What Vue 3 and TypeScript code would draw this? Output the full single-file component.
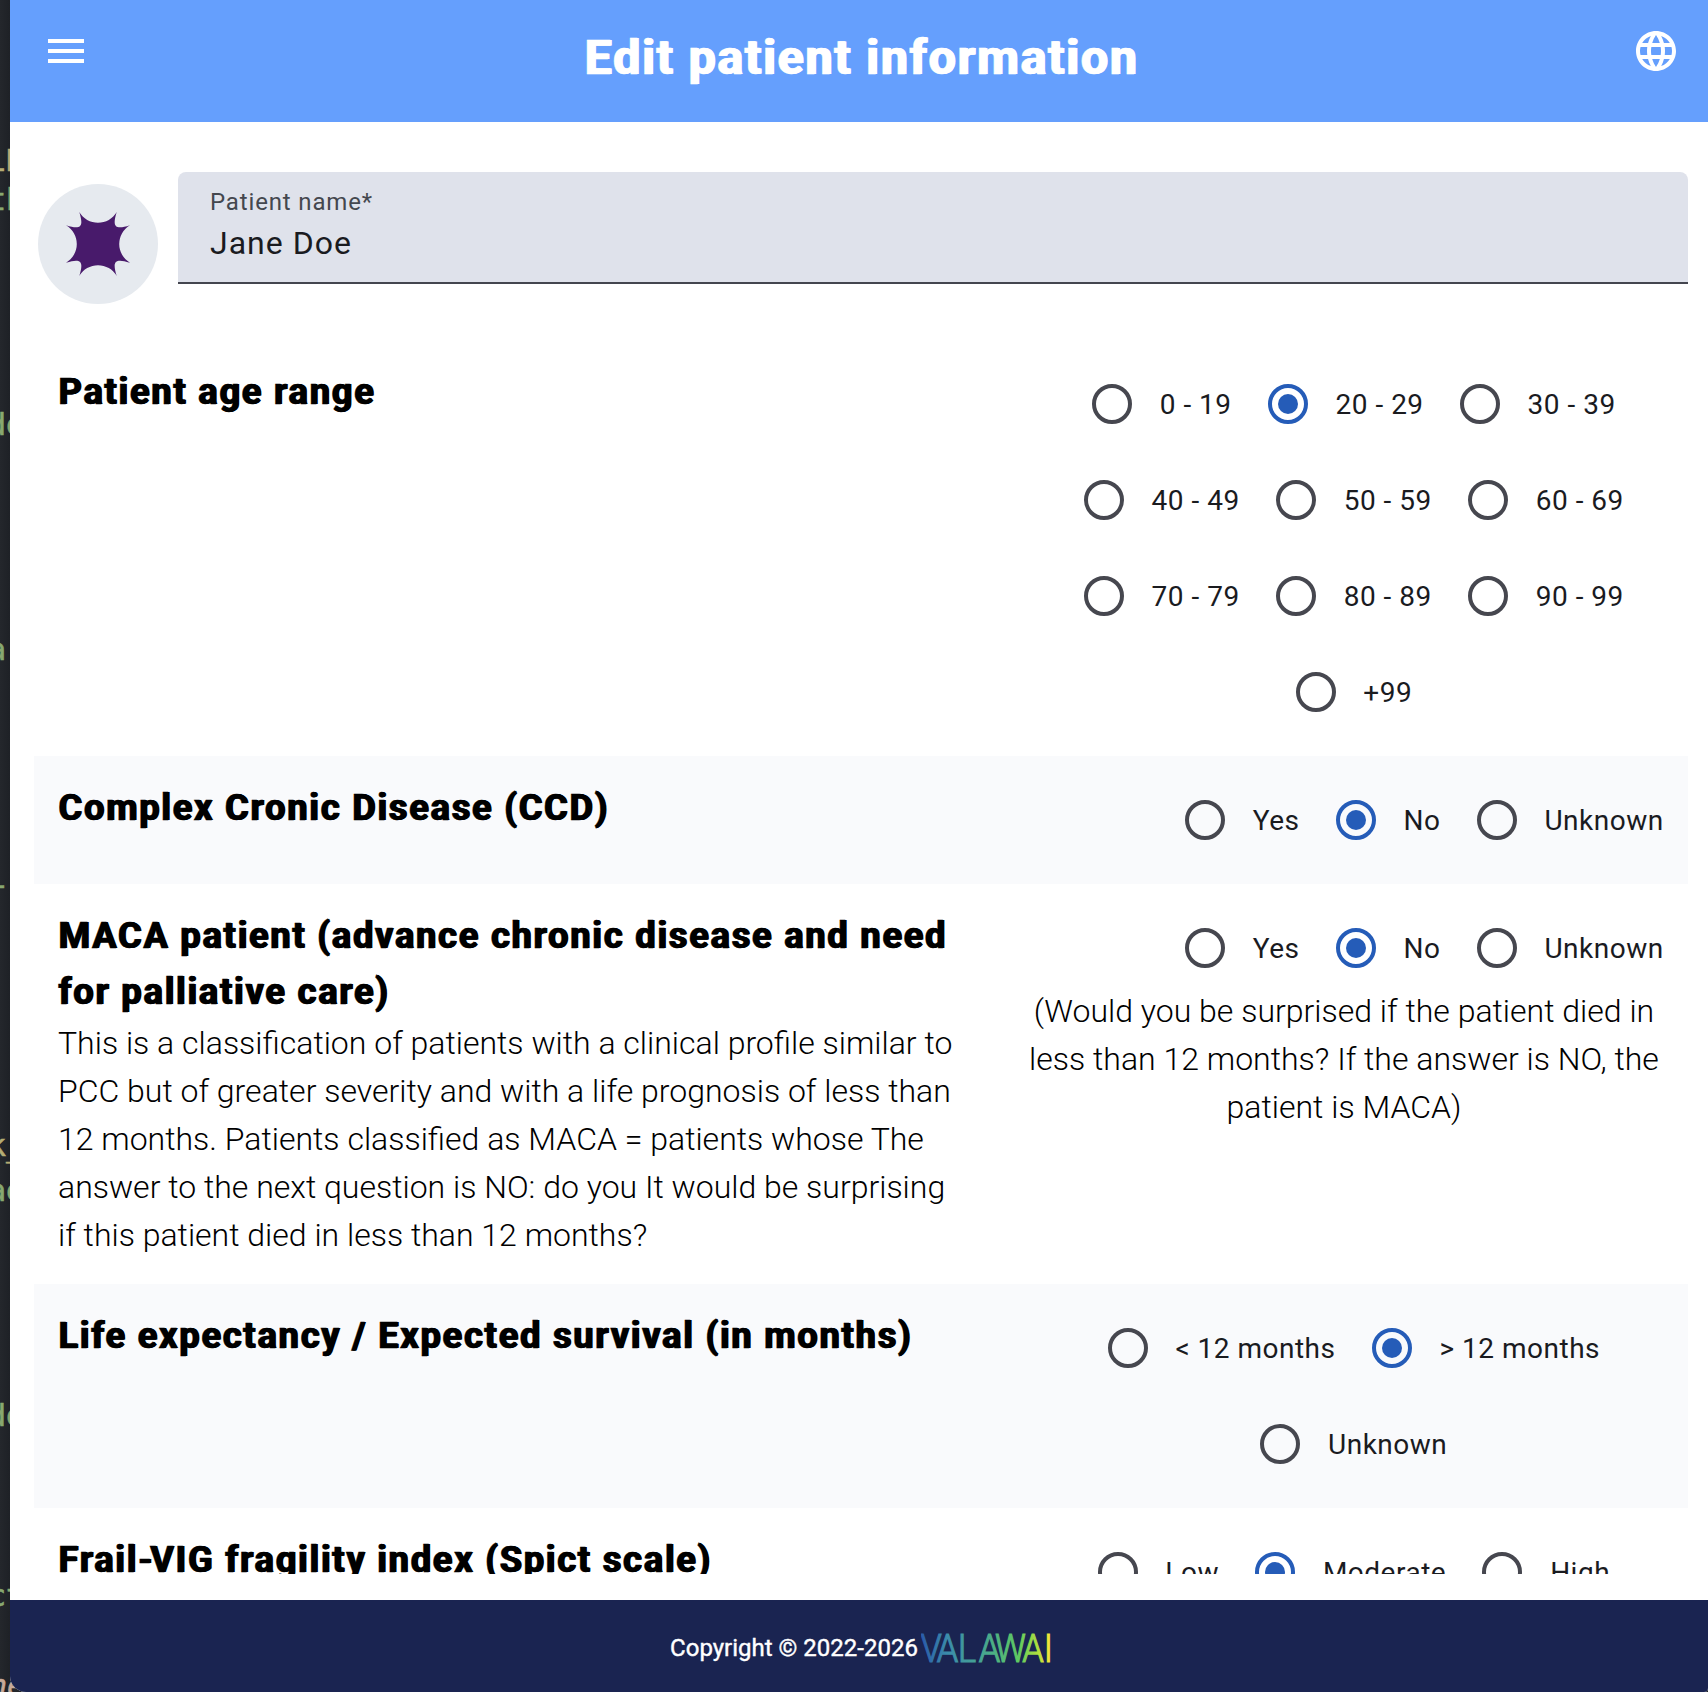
<script setup lang="ts">
interface Question {
  title: string
  description?: string
  options: string[]
  selected: string
  hint?: string
  wide?: boolean
}

interface CodeFragment {
  text: string
  top: number
  left: number
  tone: string
}

const questions: Question[] = [
  {
    title: 'Patient age range',
    options: ['0 - 19', '20 - 29', '30 - 39', '40 - 49', '50 - 59', '60 - 69', '70 - 79', '80 - 89', '90 - 99', '+99'],
    selected: '20 - 29',
    wide: true,
  },
  { title: 'Complex Cronic Disease (CCD)', options: ['Yes', 'No', 'Unknown'], selected: 'No' },
  {
    title: 'MACA patient (advance chronic disease and need for palliative care)',
    description:
      'This is a classification of patients with a clinical profile similar to PCC but of greater severity and with a life prognosis of less than 12 months. Patients classified as MACA = patients whose The answer to the next question is NO: do you It would be surprising if this patient died in less than 12 months?',
    options: ['Yes', 'No', 'Unknown'],
    selected: 'No',
    hint: '(Would you be surprised if the patient died in less than 12 months? If the answer is NO, the patient is MACA)',
  },
  {
    title: 'Life expectancy / Expected survival (in months)',
    options: ['< 12 months', '> 12 months', 'Unknown'],
    selected: '> 12 months',
    wide: true,
  },
  {
    title: 'Frail-VIG fragility index (Spict scale)',
    options: ['Low', 'Moderate', 'High'],
    selected: 'Moderate',
    wide: true,
  },
]

const fragments: CodeFragment[] = [
  { text: 'LL', top: 143, left: -13, tone: 'yellow' },
  { text: 'th', top: 182, left: -12, tone: 'green' },
  { text: 'de', top: 407, left: -12, tone: 'green' },
  { text: 'ar', top: 632, left: -12, tone: 'green' },
  { text: '--', top: 867, left: -9, tone: 'green' },
  { text: 'k_', top: 1128, left: -12, tone: 'yellow' },
  { text: 'ae', top: 1173, left: -12, tone: 'green' },
  { text: 'de', top: 1398, left: -12, tone: 'green' },
  { text: 'ct', top: 1578, left: -12, tone: 'green' },
  { text: 'ne', top: 1668, left: -11, tone: 'pink' },
]
</script>

<template>
  <div class="desktop">
    <aside class="editor">
      <span
        v-for="f in fragments"
        :key="f.top"
        class="code"
        :class="f.tone"
        :style="{ top: f.top + 'px', left: f.left + 'px' }"
      >{{ f.text }}</span>
    </aside>
    <div class="window">
      <header class="toolbar">
        <button class="icon-button" aria-label="Menu">
          <svg viewBox="0 0 24 24"><path d="M3 18h18v-2H3v2zm0-5h18v-2H3v2zm0-7v2h18V6H3z" /></svg>
        </button>
        <h1>Edit patient information</h1>
        <button class="icon-button" aria-label="Language">
          <svg viewBox="0 0 24 24">
            <path d="M11.99 2C6.47 2 2 6.48 2 12s4.47 10 9.99 10C17.52 22 22 17.52 22 12S17.52 2 11.99 2zm6.93 6h-2.95c-.32-1.25-.78-2.45-1.38-3.56 1.84.63 3.37 1.91 4.33 3.56zM12 4.04c.83 1.2 1.48 2.53 1.91 3.96h-3.82c.43-1.43 1.08-2.76 1.91-3.96zM4.26 14C4.1 13.36 4 12.69 4 12s.1-1.36.26-2h3.38c-.08.66-.14 1.32-.14 2s.06 1.34.14 2H4.26zm.82 2h2.95c.32 1.25.78 2.45 1.38 3.56-1.84-.63-3.37-1.9-4.33-3.56zm2.95-8H5.08c.96-1.66 2.49-2.93 4.33-3.56C8.81 5.55 8.35 6.75 8.03 8zM12 19.96c-.83-1.2-1.48-2.53-1.91-3.96h3.82c-.43 1.43-1.08 2.76-1.91 3.96zM14.34 14H9.66c-.09-.66-.16-1.32-.16-2s.07-1.35.16-2h4.68c.09.65.16 1.32.16 2s-.07 1.34-.16 2zm.25 5.56c.6-1.11 1.06-2.31 1.38-3.56h2.95c-.96 1.65-2.49 2.93-4.33 3.56zM16.36 14c.08-.66.14-1.32.14-2s-.06-1.34-.14-2h3.38c.16.64.26 1.31.26 2s-.1 1.36-.26 2h-3.38z" />
          </svg>
        </button>
      </header>

      <main class="content">
        <section class="identity">
          <svg class="avatar" viewBox="-60 -60 120 120">
            <circle r="60" fill="#e6eaef" />
            <path
              fill="#481a6b"
              d="M-18.7 -32 A21.6 21.6 0 0 0 18.7 -32 C14 -17 17 -14 32 -18.7 A21.6 21.6 0 0 0 32 18.7 C17 14 14 17 18.7 32 A21.6 21.6 0 0 0 -18.7 32 C-14 17 -17 14 -32 18.7 A21.6 21.6 0 0 0 -32 -18.7 C-17 -14 -14 -17 -18.7 -32Z"
            />
          </svg>
          <div class="field">
            <span class="field-label">Patient name*</span>
            <span class="field-value">Jane Doe</span>
          </div>
        </section>

        <section v-for="q in questions" :key="q.title" class="question">
          <div class="prompt">
            <h2><template v-for="(part, i) in q.title.split('-')" :key="i"><span v-if="i > 0" class="hyphen">-</span>{{ part }}</template></h2>
            <p v-if="q.description">{{ q.description }}</p>
          </div>
          <div class="answer">
            <div class="radios" :class="{ wide: q.wide }">
              <label v-for="o in q.options" :key="o" class="radio">
                <span class="target"><span class="ring" :class="{ checked: o === q.selected }"></span></span>
                <span class="radio-text">{{ o }}</span>
              </label>
            </div>
            <p v-if="q.hint" class="hint">{{ q.hint }}</p>
          </div>
        </section>
      </main>

      <footer class="footer">
        <span>Copyright © 2022-2026</span>
        <svg class="logo" viewBox="0 0 132 32">
          <defs>
            <linearGradient id="brand" gradientUnits="userSpaceOnUse" x1="0" y1="0" x2="148" y2="0">
              <stop offset="0" stop-color="#2a5bab" />
              <stop offset="0.2" stop-color="#3b8cab" />
              <stop offset="0.5" stop-color="#48a88e" />
              <stop offset="0.75" stop-color="#5fcb61" />
              <stop offset="0.9" stop-color="#b2e03d" />
              <stop offset="1" stop-color="#fde838" />
            </linearGradient>
          </defs>
          <text
            class="logo-text"
            transform="scale(0.88 1)"
            x="-0.5 18 42 65.5 84 115 139.5"
            y="30"
            fill="url(#brand)"
            stroke="url(#brand)"
          >VALAWAI</text>
        </svg>
      </footer>
    </div>
  </div>
</template>

<style>
body {
  margin: 0;
}
</style>

<style scoped>
.desktop {
  display: flex;
  width: 1708px;
  height: 1692px;
  overflow: hidden;
  background: #23262b;
  font-family: Roboto, "Liberation Sans", sans-serif;
  color: #000;
}

.editor {
  position: relative;
  flex: none;
  width: 10px;
  background: linear-gradient(90deg, #24272c, #1e2126);
}

.code {
  position: absolute;
  font: 30px/36px "DejaVu Sans Mono", monospace;
  white-space: pre;
  -webkit-text-stroke: 0.6px currentColor;
}

.green {
  color: #88a870;
}

.yellow {
  color: #b5ad74;
}

.pink {
  color: #c8aa98;
  font-style: italic;
}

.window {
  position: relative;
  display: flex;
  flex-direction: column;
  width: 1698px;
  height: 1692px;
  overflow: hidden;
  border-radius: 0 0 4px 16px;
  background: #fff;
}

.toolbar {
  display: flex;
  flex: none;
  justify-content: space-between;
  box-sizing: border-box;
  height: 122px;
  padding: 27px 28px 0 32px;
  background: #659ffd;
  color: #fff;
}

.icon-button {
  width: 48px;
  height: 48px;
  padding: 0;
  border: 0;
  background: none;
}

.icon-button svg {
  display: block;
  width: 48px;
  height: 48px;
  fill: #fff;
}

h1 {
  margin: 0;
  font-size: 48px;
  font-weight: 700;
  line-height: 62px;
  letter-spacing: 1.88px;
  text-shadow: 1px 0 #fff, 1.8px 0 #fff;
  -webkit-text-stroke: 0.4px #fff;
}

.content {
  flex: none;
  height: 1452px;
  padding: 0 20px 0 24px;
  overflow: hidden;
}

.identity {
  display: flex;
  gap: 20px;
  box-sizing: border-box;
  height: 218px;
  padding: 50px 0 0 4px;
}

.avatar {
  flex: none;
  width: 120px;
  height: 120px;
  margin-top: 12px;
}

.field {
  display: flex;
  flex: 1;
  flex-direction: column;
  box-sizing: border-box;
  height: 112px;
  padding: 14px 32px 0;
  border-bottom: 2px solid #44464f;
  border-radius: 8px 8px 0 0;
  background: #dfe2eb;
}

.field-label {
  font-size: 24px;
  line-height: 32px;
  letter-spacing: 0.85px;
  color: #44474e;
}

.field-value {
  font-size: 32px;
  line-height: 50px;
  letter-spacing: 1px;
  color: #1a1b1f;
}

.question {
  display: flex;
  justify-content: space-between;
  padding: 24px;
}

.question:nth-child(odd) {
  background: #f9fafc;
}

.prompt {
  width: 902px;
}

h2 {
  margin: 0;
  font-size: 36px;
  font-weight: 700;
  line-height: 56px;
  letter-spacing: 1.88px;
  text-shadow: 0.8px 0 #000, 1.5px 0 #000;
  -webkit-text-stroke: 0.4px #000;
}

.hyphen {
  margin-right: -4px;
}

p {
  margin: -1px 0 1px;
  font-size: 32px;
  font-weight: 300;
  line-height: 48px;
}

.answer {
  display: flex;
  flex-direction: column;
  align-items: flex-end;
  width: 640px;
}

.radios {
  display: flex;
  flex-wrap: wrap;
  justify-content: center;
  gap: 16px;
}

.radios.wide {
  width: 100%;
}

.radio {
  display: flex;
  align-items: center;
}

.target {
  display: grid;
  place-items: center;
  width: 80px;
  height: 80px;
}

.ring {
  display: grid;
  place-items: center;
  box-sizing: border-box;
  width: 40px;
  height: 40px;
  border: 4px solid #46474f;
  border-radius: 50%;
}

.ring.checked {
  border-color: #255cb8;
}

.ring.checked::after {
  width: 20px;
  height: 20px;
  border-radius: 50%;
  background: #255cb8;
  content: "";
}

.radio-text {
  padding: 2px 0.3px 0 7.7px;
  font-size: 28px;
  line-height: 40px;
  letter-spacing: 0.5px;
  color: #1a1b1f;
}

.hint {
  width: 100%;
  text-align: center;
}

.footer {
  display: flex;
  align-items: center;
  justify-content: center;
  box-sizing: border-box;
  height: 92px;
  margin-top: 26px;
  padding: 3px 0 0 5px;
  gap: 3px;
  background: #1a2451;
  color: #fff;
  font-size: 24px;
  font-weight: 400;
  line-height: 36px;
  -webkit-text-stroke: 0.4px #fff;
}

.logo {
  width: 132px;
  height: 32px;
}

.logo-text {
  font-family: Roboto, sans-serif;
  font-size: 39px;
  font-weight: 300;
  stroke-width: 1.2px;
  -webkit-text-stroke: 0;
}
</style>
